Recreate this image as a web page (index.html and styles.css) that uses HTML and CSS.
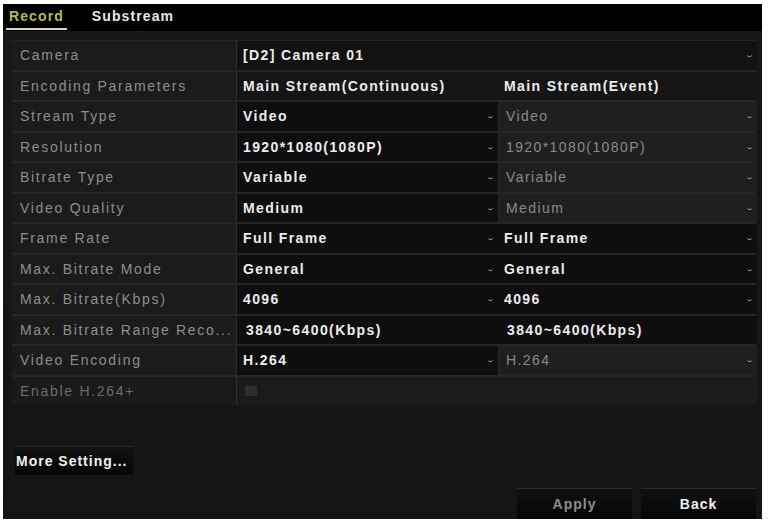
FILE: index.html
```html
<!DOCTYPE html>
<html lang="en">
<head>
    <meta charset="UTF-8">
    <title>Record Encoding</title>
    <link rel="stylesheet" href="styles.css">
</head>
<body>

    <div class="window">
        <div class="tabs">
            <span class="tab active">Record</span>
            <span class="tab">Substream</span>
        </div>

        <div class="panel">
            <div class="grid">
                <div class="label">Camera</div>
                <div class="value wide select">[D2] Camera 01<i class="arrow"></i></div>

                <div class="label">Encoding Parameters</div>
                <div class="value head">Main Stream(Continuous)</div>
                <div class="value head">Main Stream(Event)</div>

                <div class="label">Stream Type</div>
                <div class="value select">Video<i class="arrow"></i></div>
                <div class="value off select">Video<i class="arrow"></i></div>

                <div class="label">Resolution</div>
                <div class="value select">1920*1080(1080P)<i class="arrow"></i></div>
                <div class="value off select">1920*1080(1080P)<i class="arrow"></i></div>

                <div class="label">Bitrate Type</div>
                <div class="value select">Variable<i class="arrow"></i></div>
                <div class="value off select">Variable<i class="arrow"></i></div>

                <div class="label">Video Quality</div>
                <div class="value select">Medium<i class="arrow"></i></div>
                <div class="value off select">Medium<i class="arrow"></i></div>

                <div class="label">Frame Rate</div>
                <div class="value select">Full Frame<i class="arrow"></i></div>
                <div class="value select">Full Frame<i class="arrow"></i></div>

                <div class="label">Max. Bitrate Mode</div>
                <div class="value select">General<i class="arrow"></i></div>
                <div class="value select">General<i class="arrow"></i></div>

                <div class="label">Max. Bitrate(Kbps)</div>
                <div class="value select">4096<i class="arrow"></i></div>
                <div class="value select">4096<i class="arrow"></i></div>

                <div class="label">Max. Bitrate Range Reco...</div>
                <div class="value text">3840~6400(Kbps)</div>
                <div class="value text">3840~6400(Kbps)</div>

                <div class="label">Video Encoding</div>
                <div class="value select">H.264<i class="arrow"></i></div>
                <div class="value off select">H.264<i class="arrow"></i></div>

                <div class="label dim">Enable H.264+</div>
                <div class="value wide blank"><span class="check"></span></div>
            </div>

            <button class="btn more">More Setting...</button>

            <div class="footer">
                <button class="btn off-btn">Apply</button>
                <button class="btn">Back</button>
            </div>
        </div>
    </div>

</body>
</html>
```

FILE: styles.css
```css
body {
    margin: 0;
    background: #fff;
    font-family: 'Liberation Sans', Arial, sans-serif;
    font-size: 14px;
}
.window {
    margin: 4px 6px 0 3px;
    height: 515px;
    background: linear-gradient(#181716, #141513);
    display: flex;
    flex-direction: column;
}
.tabs {
    height: 27px;
    background: #000;
    display: flex;
    gap: 22px;
    padding-left: 3px;
}
.tab {
    color: #e8e8e8;
    font-weight: bold;
    letter-spacing: 1.1px;
    padding: 4px 3px 0;
    border-bottom: 2px solid transparent;
    height: 20px;
}
.tab.active {
    color: #b3bb47;
    border-bottom-color: #d6d8a6;
}
.panel {
    flex: 1;
    display: flex;
    flex-direction: column;
    padding: 9px 6px 0 9px;
}
.grid {
    display: grid;
    grid-template-columns: 225px 261px 259px;
    grid-auto-rows: 28.5px;
    row-gap: 2px;
    background: #262626;
    border-top: 1px solid #262626;
    letter-spacing: 1.4px;
}
.grid > div {
    display: flex;
    align-items: center;
    position: relative;
    white-space: nowrap;
}
.label {
    background: #1b1b1b;
    color: #8e8e8e;
    padding-left: 8px;
    letter-spacing: 1.7px;
    border-right: 1px solid #303030;
}
.label.dim {
    color: #6c6c6c;
    background: #1a1a19;
}
.value {
    background: #0e0e0e;
    color: #ececec;
    font-weight: bold;
    padding-left: 6px;
}
.value.wide {
    grid-column: span 2;
    background: #121212;
}
.value.head {
    background: #151515;
}
.value.off {
    background: #1f1f1f;
    color: #8a8a8a;
    font-weight: normal;
    border-left: 2px solid #262626;
}
.grid > .value:nth-child(3n) {
    margin-left: 2px;
}
.value.text {
    padding-left: 9px;
}
.value.blank {
    background: #1b1b1a;
}
.arrow {
    position: absolute;
    right: 5px;
    top: 12px;
    width: 5px;
    height: 3px;
    border-bottom: 1px solid #9a9a9a;
    border-radius: 0 0 4px 4px;
}
.check {
    width: 12px;
    height: 10px;
    background: #2e2e2d;
    margin-left: 2px;
}
.btn {
    font-family: 'Liberation Sans', Arial, sans-serif;
    font-size: 14px;
    font-weight: bold;
    letter-spacing: 1px;
    color: #f0f0f0;
    background: linear-gradient(#111, #050505);
    border: none;
    border-top: 1px solid #2a2a2a;
    padding: 0;
}
.more {
    align-self: flex-start;
    margin: 41px 0 0 3px;
    width: 118px;
    height: 29px;
    text-align: left;
    padding-left: 1px;
    white-space: nowrap;
}
.footer {
    display: flex;
    justify-content: flex-end;
    gap: 9px;
    margin-top: 13px;
}
.footer .btn {
    width: 115px;
    height: 31px;
}
.off-btn {
    color: #8c8c8c;
}
```
